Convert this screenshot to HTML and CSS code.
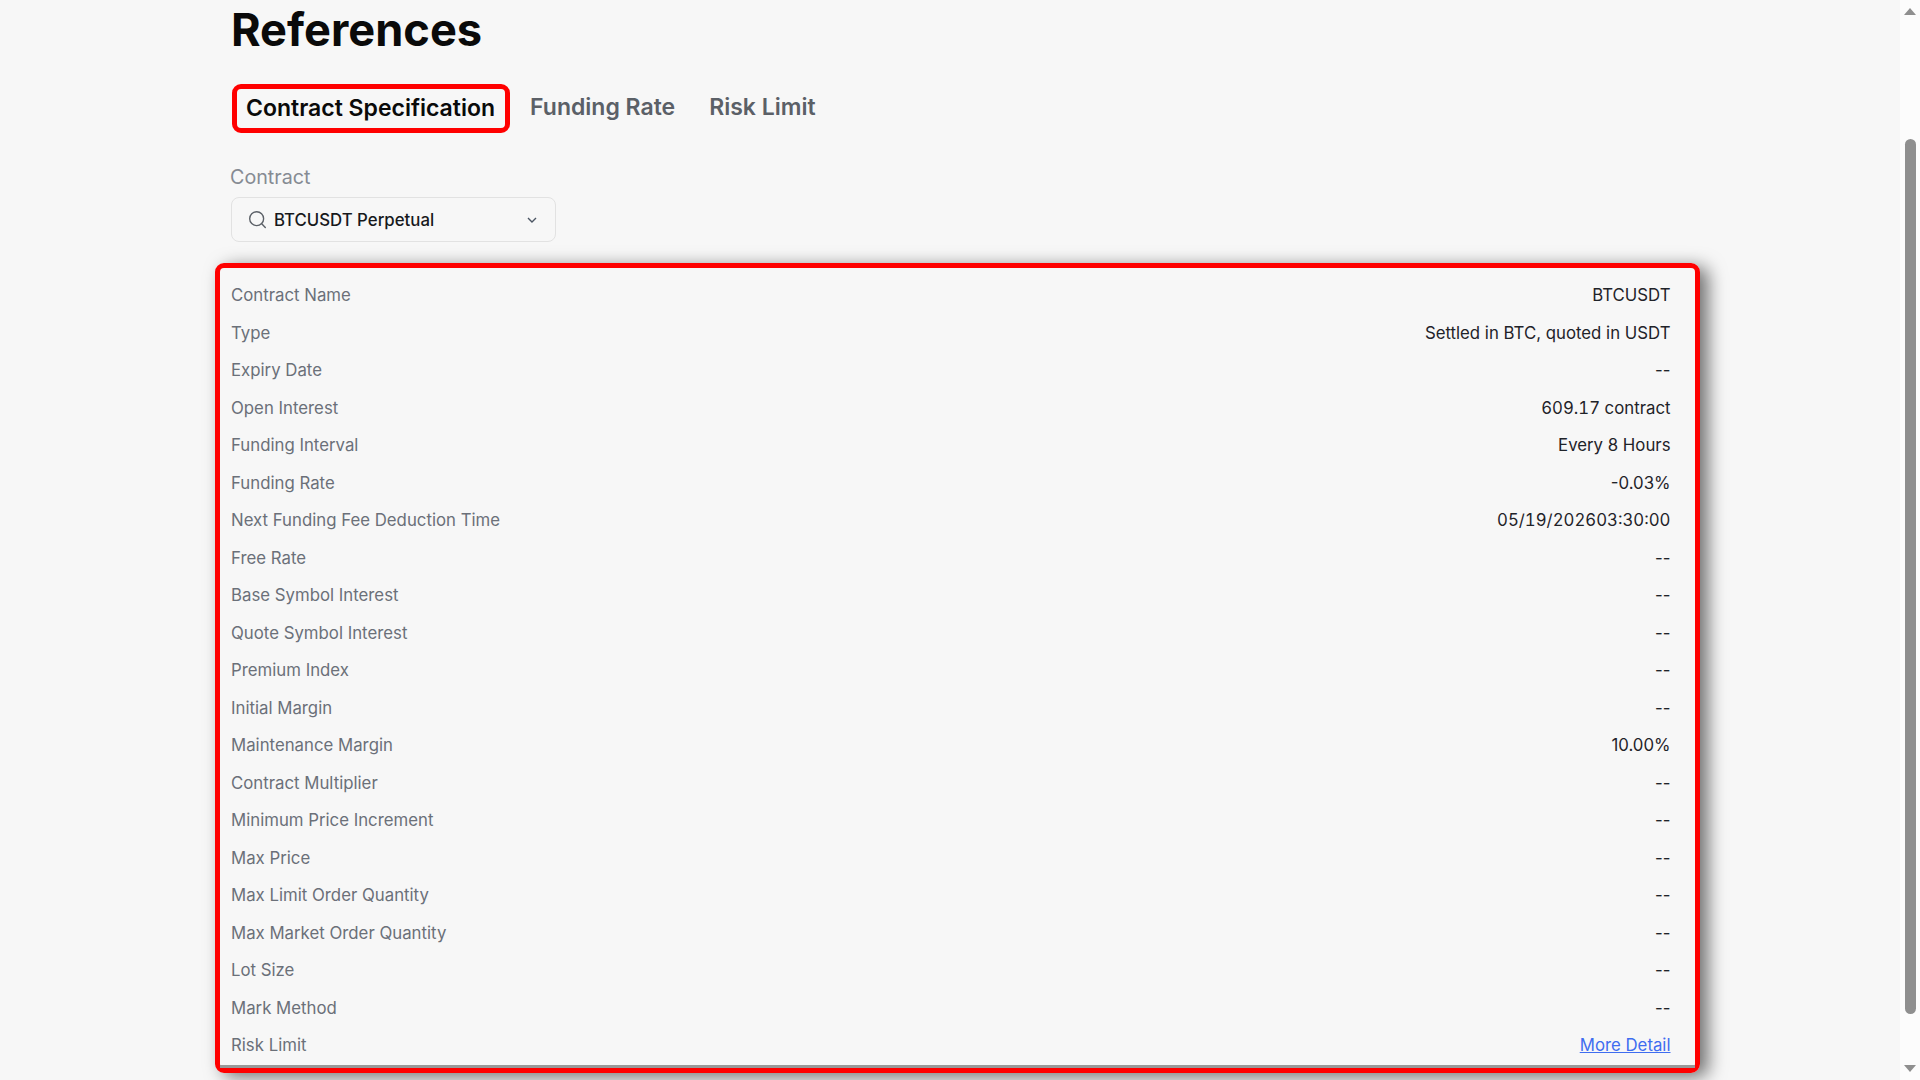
FILE: index.html
```html
<!DOCTYPE html>
<html lang="en">
<head>
    <meta charset="UTF-8">
    <title>References</title>
    <link rel="stylesheet" href="styles.css">
</head>
<body>
    <div class="page">
        <div class="main">
            <h1 class="title">References</h1>
            <div class="tabs">
                <div class="tab active">Contract Specification</div>
                <div class="tab">Funding Rate</div>
                <div class="tab">Risk Limit</div>
            </div>
            <div class="field-label">Contract</div>
            <div class="select">
                <svg class="search-icon" viewBox="0 0 18 18" width="19" height="19" fill="none" stroke="#5b6067" stroke-width="1.3">
                    <circle cx="8.2" cy="8.2" r="6.6"/>
                    <path d="M13 13 16.4 16.6" stroke-linecap="round"/>
                </svg>
                <span class="select-text">BTCUSDT Perpetual</span>
                <svg class="chevron" viewBox="0 0 10 6" width="10" height="6" fill="none" stroke="#4b5563" stroke-width="1.4">
                    <path d="M1 1 5 5 9 1"/>
                </svg>
            </div>
            <div class="spec-box">
                <div class="spec-list">
                    <div class="row"><span class="name">Contract Name</span><span class="value">BTCUSDT</span></div>
                    <div class="row"><span class="name">Type</span><span class="value">Settled in BTC, quoted in USDT</span></div>
                    <div class="row"><span class="name">Expiry Date</span><span class="value">--</span></div>
                    <div class="row"><span class="name">Open Interest</span><span class="value num">609.17 contract</span></div>
                    <div class="row"><span class="name">Funding Interval</span><span class="value">Every 8 Hours</span></div>
                    <div class="row"><span class="name">Funding Rate</span><span class="value">-0.03%</span></div>
                    <div class="row"><span class="name">Next Funding Fee Deduction Time</span><span class="value num">05/19/202603:30:00</span></div>
                    <div class="row"><span class="name">Free Rate</span><span class="value">--</span></div>
                    <div class="row"><span class="name">Base Symbol Interest</span><span class="value">--</span></div>
                    <div class="row"><span class="name">Quote Symbol Interest</span><span class="value">--</span></div>
                    <div class="row"><span class="name">Premium Index</span><span class="value">--</span></div>
                    <div class="row"><span class="name">Initial Margin</span><span class="value">--</span></div>
                    <div class="row"><span class="name">Maintenance Margin</span><span class="value">10.00%</span></div>
                    <div class="row"><span class="name">Contract Multiplier</span><span class="value">--</span></div>
                    <div class="row"><span class="name">Minimum Price Increment</span><span class="value">--</span></div>
                    <div class="row"><span class="name">Max Price</span><span class="value">--</span></div>
                    <div class="row"><span class="name">Max Limit Order Quantity</span><span class="value">--</span></div>
                    <div class="row"><span class="name">Max Market Order Quantity</span><span class="value">--</span></div>
                    <div class="row"><span class="name">Lot Size</span><span class="value">--</span></div>
                    <div class="row"><span class="name">Mark Method</span><span class="value">--</span></div>
                    <div class="row"><span class="name">Risk Limit</span><a class="value link" href="#">More Detail</a></div>
                </div>
            </div>
        </div>
        <div class="scrollbar">
            <div class="arrow-up"></div>
            <div class="thumb"></div>
            <div class="arrow-down"></div>
        </div>
    </div>
</body>
</html>
```

FILE: styles.css
```css
* {
    box-sizing: border-box;
}
html, body {
    margin: 0;
    height: 100%;
    overflow: hidden;
}
body {
    font-family: Inter, "Liberation Sans", sans-serif;
    background: #f7f7f7;
    color: #1f2329;
}
.page {
    display: flex;
    height: 1080px;
}
.main {
    flex: 1;
    padding-left: 215px;
}
.title {
    margin: 0 0 0 16px;
    height: 84px;
    font-size: 45.2px;
    line-height: 60px;
    font-weight: 700;
    color: #0a0a0a;
}
.tabs {
    display: flex;
    align-items: center;
    margin-left: 17px;
    height: 49px;
}
.tab {
    font-size: 23px;
    line-height: 27px;
    font-weight: 600;
    color: #5b6067;
    margin-right: 34px;
    margin-bottom: 2px;
}
.tab.active {
    color: #0a0a0a;
    border: 5px solid #ff0000;
    border-radius: 9px;
    padding: 0 10px 1px 9px;
    line-height: 38px;
    margin-right: 20px;
    margin-bottom: 0;
}
.field-label {
    margin: 32px 0 7px 15px;
    font-size: 19.7px;
    line-height: 25px;
    color: #868b93;
}
.select {
    display: flex;
    align-items: center;
    width: 325px;
    height: 45px;
    margin-left: 16px;
    padding: 0 18px 0 16px;
    background: #f7f7f7;
    border: 1px solid #e2e2e2;
    border-radius: 8px;
}
.search-icon {
    flex: none;
}
.select-text {
    flex: 1;
    margin-left: 7px;
    font-size: 16.8px;
    font-weight: 500;
    color: #17191c;
}
.chevron {
    flex: none;
}
.spec-box {
    width: 1485px;
    height: 810px;
    margin-top: 21px;
    border: 5px solid #ff0000;
    border-radius: 9px;
    box-shadow: 8px 4px 18px rgba(0, 0, 0, 0.55);
}
.spec-list {
    height: 100%;
    padding: 8.5px 24.5px 0 11px;
    border-bottom: 3px solid #999999;
}
.row {
    display: flex;
    justify-content: space-between;
    align-items: center;
    height: 37.5px;
    font-size: 16.8px;
}
.name {
    color: #6b7079;
}
.value {
    color: #1f2329;
}
.num {
    font-variant-numeric: tabular-nums;
}
.link {
    color: #3f6df0;
    text-decoration: underline;
}
.scrollbar {
    flex: none;
    display: flex;
    flex-direction: column;
    align-items: center;
    width: 20px;
    background: #fcfcfc;
}
.arrow-up {
    margin-top: 8px;
    border-left: 6.5px solid transparent;
    border-right: 6.5px solid transparent;
    border-bottom: 7px solid #8f8f8f;
}
.thumb {
    width: 11px;
    height: 875px;
    margin-top: 124px;
    border-radius: 6px;
    background: #8f8f8f;
}
.arrow-down {
    margin-top: 51px;
    border-left: 6.5px solid transparent;
    border-right: 6.5px solid transparent;
    border-top: 7px solid #8f8f8f;
}
```
